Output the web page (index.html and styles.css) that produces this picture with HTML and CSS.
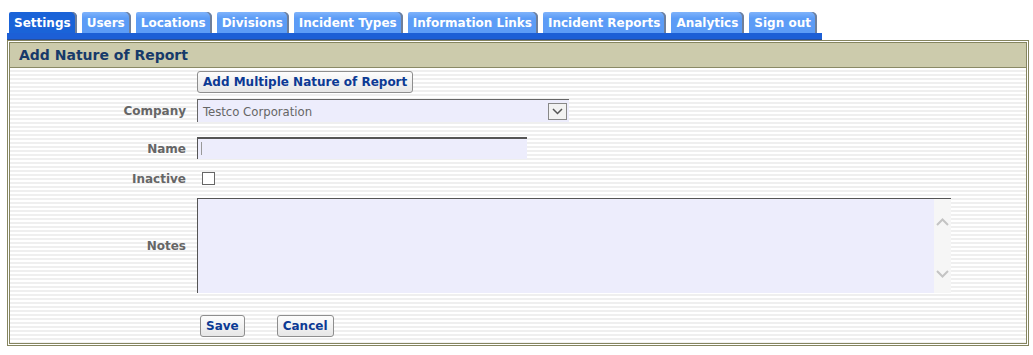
FILE: index.html
```html
<!DOCTYPE html>
<html lang="en">
<head>
    <meta charset="UTF-8">
    <title>Add Nature of Report</title>
    <link rel="stylesheet" href="styles.css">
</head>
<body>

<div class="tabs">
    <a class="tab active" href="#">Settings</a>
    <a class="tab" href="#">Users</a>
    <a class="tab" href="#">Locations</a>
    <a class="tab" href="#">Divisions</a>
    <a class="tab" href="#">Incident Types</a>
    <a class="tab" href="#">Information Links</a>
    <a class="tab" href="#">Incident Reports</a>
    <a class="tab" href="#">Analytics</a>
    <a class="tab" href="#">Sign out</a>
</div>

<div class="panel">
    <div class="panel-title">Add Nature of Report</div>
    <div class="panel-body">
        <div class="row first">
            <div class="label"></div>
            <button class="btn">Add Multiple Nature of Report</button>
        </div>

        <div class="row row-company">
            <div class="label">Company</div>
            <div class="select">
                <span>Testco Corporation</span>
                <span class="select-arrow">
                    <svg width="11" height="7" viewBox="0 0 11 7"><path d="M1 1 L5.5 5.5 L10 1" fill="none" stroke="#555" stroke-width="1.5"/></svg>
                </span>
            </div>
        </div>

        <div class="row row-name">
            <div class="label">Name</div>
            <div class="text-input"><span class="caret"></span></div>
        </div>

        <div class="row">
            <div class="label">Inactive</div>
            <span class="checkbox"></span>
        </div>

        <div class="row">
            <div class="label">Notes</div>
            <div class="textarea">
                <div class="scrollbar">
                    <svg width="13" height="8" viewBox="0 0 13 8"><path d="M1 7 L6.5 1.5 L12 7" fill="none" stroke="#c4c4c4" stroke-width="2"/></svg>
                    <svg width="13" height="8" viewBox="0 0 13 8"><path d="M1 1 L6.5 6.5 L12 1" fill="none" stroke="#c4c4c4" stroke-width="2"/></svg>
                </div>
            </div>
        </div>

        <div class="row row-actions">
            <div class="label"></div>
            <div class="actions">
                <button class="btn">Save</button>
                <button class="btn">Cancel</button>
            </div>
        </div>
    </div>
</div>

</body>
</html>
```

FILE: styles.css
```css
body {
    margin: 0;
    padding: 12px 4px 0 7px;
    background-color: #fff;
    font-family: "DejaVu Sans", Verdana, sans-serif;
}

/* Tab strip */
.tabs {
    display: flex;
    gap: 5px;
    width: fit-content;
    padding: 0 5px 0 2px;
    border-bottom: 6px solid #1c5fd6;
    box-shadow: 0 1px 0 #2a4f9a;
}

.tab {
    display: block;
    height: 21px;
    line-height: 23px;
    padding: 0 6px 0 5px;
    background: linear-gradient(#7fb3fb, #5c9cf6 30%);
    color: #fff;
    font-size: 12px;
    font-weight: bold;
    text-decoration: none;
    border-radius: 2px 5px 0 0;
    box-shadow: inset -2px 0 0 #6f7f9a;
}

.tab.active {
    background: #1a63d8;
}

/* Panel */
.panel {
    margin-top: 1px;
    border: 3px double #85855f;
}

.panel-title {
    background-color: #cccbac;
    border-bottom: 1px solid #8a8a66;
    color: #173a6a;
    font-size: 14px;
    font-weight: bold;
    height: 24px;
    line-height: 25px;
    padding-left: 9px;
}

.panel-body {
    background: repeating-linear-gradient(#fff 0, #fff 2px, #efefef 2px, #efefef 4px);
    padding: 3px 0 6px;
}

.row {
    display: flex;
    align-items: center;
    gap: 11px;
    margin-top: 13px;
}

.row.first {
    margin-top: 0;
}

.row.row-company {
    margin-top: 6px;
}

.row.row-name {
    margin-top: 15px;
}

.row.row-actions {
    margin-top: 22px;
}

.label {
    width: 176px;
    flex-shrink: 0;
    text-align: right;
    font-size: 12px;
    line-height: 13px;
    padding-top: 1px;
    margin-bottom: -1px;
    font-weight: bold;
    color: #666;
}

.btn {
    font-family: "DejaVu Sans", Verdana, sans-serif;
    font-size: 12px;
    font-weight: bold;
    color: #0c3a94;
    background: linear-gradient(#fdfdfd, #e6e6e6);
    border: 1px solid #8e8e8e;
    border-radius: 3px;
    height: 22px;
    padding: 0 5px;
}

.select {
    width: 372px;
    height: 23px;
    display: flex;
    align-items: center;
    justify-content: space-between;
    background-color: #ededfc;
    border-top: 1px solid #666;
    border-left: 1px solid #666;
    box-sizing: border-box;
    padding: 0 2px 0 5px;
    font-family: "DejaVu Sans Condensed", "DejaVu Sans", sans-serif;
    font-size: 13px;
    color: #666;
}

.select-arrow {
    width: 17px;
    height: 15px;
    border: 1px solid #888;
    background-color: #f2f2f2;
    display: flex;
    align-items: center;
    justify-content: center;
}

.text-input {
    width: 330px;
    height: 22px;
    box-sizing: border-box;
    background-color: #ededfc;
    border-top: 2px solid #555;
    border-left: 1px solid #555;
    padding: 3px 0 0 3px;
}

.caret {
    display: block;
    width: 1px;
    height: 13px;
    background-color: #999;
}

.checkbox {
    display: block;
    width: 11px;
    height: 11px;
    margin-left: 5px;
    border: 1px solid #666;
    background-color: #fff;
}

.textarea {
    width: 754px;
    height: 95px;
    box-sizing: border-box;
    background-color: #ededfc;
    border-top: 1px solid #555;
    border-left: 1px solid #555;
    display: flex;
    justify-content: flex-end;
}

.scrollbar {
    width: 17px;
    background-color: #f6f6f6;
    display: flex;
    flex-direction: column;
    justify-content: space-between;
    align-items: center;
    padding: 19px 0 15px;
}

.actions {
    display: flex;
    gap: 32px;
    padding-left: 3px;
}
```
